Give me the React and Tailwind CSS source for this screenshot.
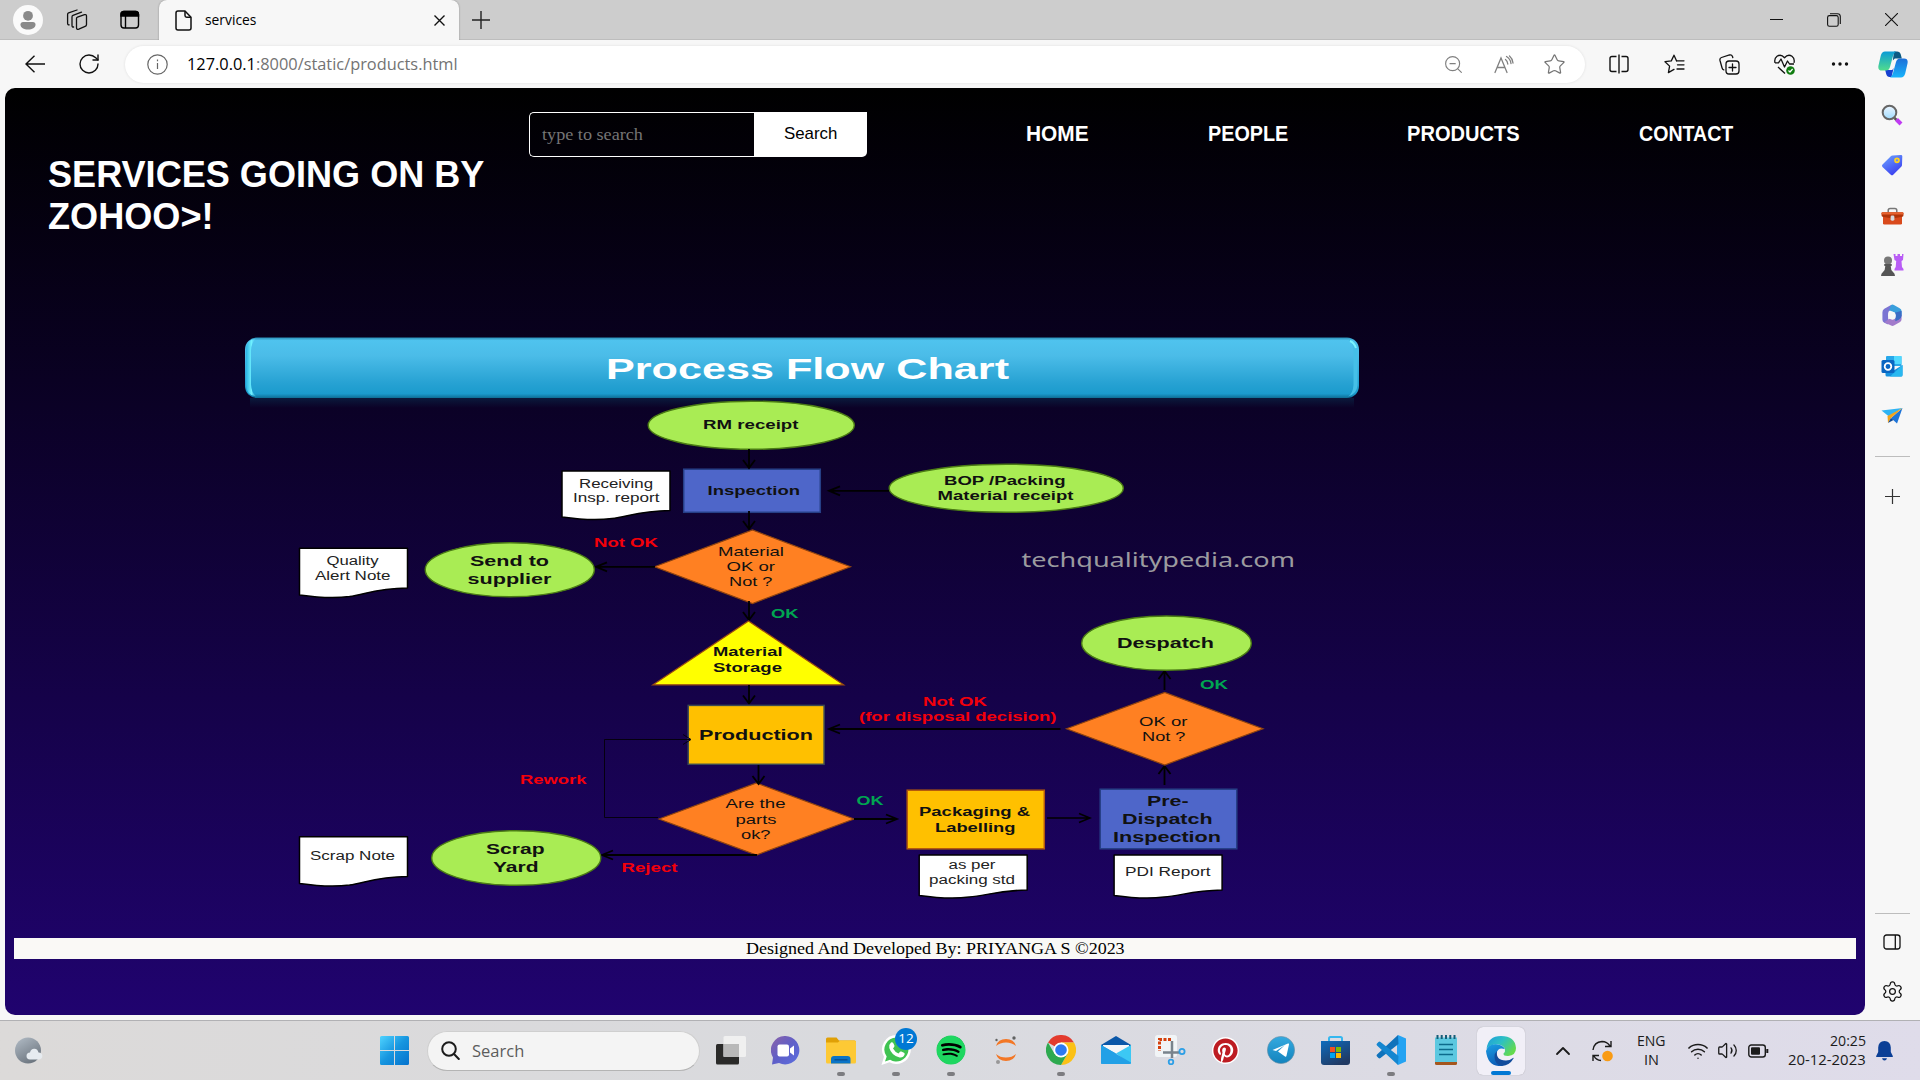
import React, { useLayoutEffect, useRef, useState } from "react";
import { ArrowLeft, RotateCw, ZoomOut, Star, ChevronUp, Wifi, Volume2, Settings } from "lucide-react";
import { FaSpotify, FaPinterest } from "react-icons/fa";

/* Single line of text stretched or condensed to a given width. */
function Fit({ w, className = "", children }) {
  const ref = useRef(null);
  const [k, setK] = useState(1);
  useLayoutEffect(() => {
    setK(w / ref.current.offsetWidth);
  }, [w]);
  return (
    <span className={"block overflow-visible whitespace-nowrap " + className} style={{ width: w }}>
      <span ref={ref} className="inline-block origin-left" style={{ transform: `scaleX(${k})` }}>
        {children}
      </span>
    </span>
  );
}

function Cell({ className = "", children }) {
  return <div className={"flex shrink-0 items-center justify-center " + className}>{children}</div>;
}

/* ---------- browser chrome ---------- */

function TitleBar() {
  return (
    <div className="flex h-10 items-center border-b border-[#bdbdbd] bg-[#cdcdcd] text-black">
      <Cell className="w-[55px]">
        <svg width="30" height="30" viewBox="0 0 30 30">
          <circle cx="15" cy="15" r="15" fill="#fafafa" />
          <circle cx="15" cy="10.8" r="4.9" fill="#8a8a8a" />
          <path d="M7.5 19.5c0-1.6 1-2.5 2.5-2.5h10c1.500 0 2.500.9 2.500 2.500 0 3.200-3.300 5-7.500 5s-7.500-1.800-7.500-5Z" fill="#8a8a8a" />
        </svg>
      </Cell>
      <Cell className="w-[45px] pr-px">
        <svg width="22" height="22" viewBox="0 0 22 22" fill="none" stroke="#111" strokeWidth="1.3" strokeLinejoin="round" strokeLinecap="round">
          <path d="M11.500 8.200 18.500 5.700q2-.6 2 1.400v8.300q0 1.500-1.400 2l-6.300 2.700q-2.300.8-2.300-1.300V9.600q0-1 1-1.400Z" />
          <path d="M7.600 18q-1.600.2-1.600-1.600V8q0-1.200 1-1.600L15.500 3.200" />
          <path d="M3.200 15.800q-1.600.2-1.600-1.600V5.500q0-1.200 1-1.600L11 1" />
        </svg>
      </Cell>
      <Cell className="w-[59px]">
        <svg width="20" height="20" viewBox="0 0 20 20" fill="none" stroke="#000" strokeWidth="1.4">
          <rect x="1" y="1.500" width="17.500" height="16.500" rx="3" />
          <path d="M1 6V4.500q0-3 3-3h11.500q3 0 3 3V6Z" fill="#000" />
          <path d="M5.500 6v12" />
        </svg>
      </Cell>
      <div className="flex h-10 w-[300px] items-center self-start rounded-t-lg bg-[#f7f7f7] shadow-[0_0_2px_rgba(0,0,0,0.35)]">
        <svg className="ml-4" width="17" height="21" viewBox="0 0 17 21" fill="none" stroke="#111" strokeWidth="1.5" strokeLinejoin="round">
          <path d="M1 3q0-2 2-2h7l6 6.200V18q0 2-2 2H3q-2 0-2-2Z" />
          <path d="M10 1v4.500q0 1.700 1.700 1.700H16" />
        </svg>
        <Fit w={51.5} className="ml-[13px] pb-px font-['Open_Sans','Noto_Sans',sans-serif] text-[14.5px] leading-5">services</Fit>
        <svg className="ml-auto mr-[14px]" width="11" height="11" viewBox="0 0 11 11" stroke="#111" strokeWidth="1.4">
          <path d="M.5.500l10 10M10.500.500l-10 10" />
        </svg>
      </div>
      <svg className="ml-[13px]" width="18" height="18" viewBox="0 0 18 18" stroke="#222" strokeWidth="1.4">
        <path d="M9 0v18M0 9h18" />
      </svg>
      <div className="ml-auto flex h-10 items-center pr-[22px]">
        <svg width="13" height="13" viewBox="0 0 13 13"><path d="M0 6.500h13" stroke="#111" /></svg>
        <svg className="ml-11" width="14" height="14" viewBox="0 0 14 14" fill="none" stroke="#111" strokeWidth="1.1">
          <rect x=".6" y="2.600" width="10.600" height="10.600" rx="1.800" />
          <path d="M3 .7h7.500q2.800 0 2.800 2.800V11" />
        </svg>
        <svg className="ml-11" width="13" height="13" viewBox="0 0 13 13" stroke="#111" strokeWidth="1.1">
          <path d="M0 0l13 13M13 0L0 13" />
        </svg>
      </div>
    </div>
  );
}

function Copilot() {
  return (
    <svg width="30" height="27" viewBox="0 0 30 27">
      <defs>
        <linearGradient id="cpA" x1="0" y1="0" x2="0" y2="1"><stop offset="0" stopColor="#0a9bd6" /><stop offset="1" stopColor="#52dc8c" /></linearGradient>
        <linearGradient id="cpB" x1="0" y1="0" x2="0" y2="1"><stop offset="0" stopColor="#1d6fd8" /><stop offset="1" stopColor="#18b4fb" /></linearGradient>
      </defs>
      <path d="M16 .5h3q3 0 3.800 3l1 4h-7l-2 2Z" fill="#0b5a84" />
      <path d="M13.500 26h-2q-2.500 0-3.300-3l-1-4h7l1.500-2Z" fill="#1741d0" />
      <path d="M7 .5h11q-2 1-3 4.500l-3 11q-1 3.500-4 3.500H4q-4.500 0-3.500-5L2.800 4.500Q4 .5 7 .5Z" fill="url(#cpA)" />
      <path d="M23 26.500H12q2-1 3-4.500l3-11q1-3.500 4-3.500h4q4.500 0 3.500 5l-2.300 10q-1.200 4-4.200 4Z" fill="url(#cpB)" />
    </svg>
  );
}

function Toolbar() {
  return (
    <div className="flex h-12 items-center bg-[#f7f7f7]">
      <Cell className="ml-[23px] w-6">
        <svg width="20" height="18" viewBox="0 0 20 18" fill="none" stroke="#111" strokeWidth="1.400">
          <path d="M20 9H1M9.500 .700 1 9l8.500 8.300" />
        </svg>
      </Cell>
      <Cell className="ml-[30px] w-6"><RotateCw size={24} strokeWidth={1.4} color="#111" /></Cell>
      <div className="ml-[24px] flex h-[37px] w-[1460px] items-center rounded-full bg-white shadow-[0_0_3px_rgba(0,0,0,0.1)]">
        <svg className="ml-[22px]" width="21" height="21" viewBox="0 0 21 21" fill="none" stroke="#666" strokeWidth="1.2">
          <circle cx="10.500" cy="10.500" r="9.700" />
          <path d="M10.500 9v6M10.500 5.500v1.700" />
        </svg>
        <Fit w={270.5} className="ml-[19px] pb-px font-['Open_Sans','Noto_Sans',sans-serif] text-[16.5px] leading-6 text-[#737373]">
          <span className="text-black">127.0.0.1</span>:8000/static/products.html
        </Fit>
        <div className="ml-auto flex items-center pr-[6px]">
          <Cell className="w-[50px]"><ZoomOut size={21} strokeWidth={1.3} color="#808080" /></Cell>
          <Cell className="w-[51px]">
            <svg width="20" height="19" viewBox="0 0 20 19" fill="none" stroke="#808080" strokeWidth="1.3" strokeLinecap="round">
              <path d="M1 17.500 7 3l6 14.500M3 12.500h8" />
              <path d="M11.500 4.500q2 1.500 2.300 4.500M12.500 1.500q4 2.500 4.500 7M15.500 1q3 2.500 3.500 7" />
            </svg>
          </Cell>
          <Cell className="w-[50px]"><Star size={23} strokeWidth={1.3} color="#757575" /></Cell>
        </div>
      </div>
      <Cell className="ml-[6px] w-[55px]">
        <svg width="20" height="20" viewBox="0 0 20 20" fill="none" stroke="#111" strokeWidth="1.4">
          <path d="M7.500 2.500H3q-2 0-2 2v11q0 2 2 2h4.500M12.500 2.500H17q2 0 2 2v11q0 2-2 2h-4.500M10 .5v19" />
        </svg>
      </Cell>
      <Cell className="ml-px w-[55px]">
        <svg width="21" height="20" viewBox="0 0 21 20" fill="none" stroke="#111" strokeWidth="1.3" strokeLinecap="round" strokeLinejoin="round">
          <path d="M12.500 6.800 10 1.200 7.300 6.900 1 7.700l4.600 4.400-1.200 6.500L10 15.400" />
          <path d="M12.500 6.800H20M13.500 10.800H20M13 15H20" />
        </svg>
      </Cell>
      <Cell className="w-[55px]">
        <svg width="21" height="21" viewBox="0 0 21 21" fill="none" stroke="#111" strokeWidth="1.300" strokeLinecap="round">
          <rect x="7" y="7" width="13" height="13" rx="3" />
          <path d="M13.500 10v7M10 13.500h7M4.800 15.800Q3.500 15.500 3.100 14L1 6.500q-.5-2.300 1.500-3L10.500 1q2.200-.5 3 1.500l.3 1.200" />
        </svg>
      </Cell>
      <Cell className="w-[55px]">
        <svg width="21" height="21" viewBox="0 0 21 21" fill="none" stroke="#111" strokeWidth="1.300" strokeLinejoin="round">
          <path d="M1 8.800Q0 4.500 3 2.200q4-2.500 7.500 1.500Q14 -.3 18 2.200q3 2.300 2 6.600M4 13l7 6.500M1 8.800h3.500L7 5l3.500 8 3-6 2 3H20" />
          <circle cx="16.500" cy="16.500" r="4.300" fill="#107c10" stroke="none" />
          <path d="m14.500 16.500 1.500 1.500 2.600-3" stroke="#fff" strokeWidth="1.200" />
        </svg>
      </Cell>
      <Cell className="w-[55px]">
        <svg width="18" height="4" viewBox="0 0 18 4" fill="#111"><circle cx="2.500" cy="2" r="1.700" /><circle cx="9" cy="2" r="1.700" /><circle cx="15.500" cy="2" r="1.700" /></svg>
      </Cell>
      <Cell className="w-[51px]"><Copilot /></Cell>
    </div>
  );
}

/* ---------- flow chart ---------- */

const LIME = "#a9ec54";
const ORANGE = "#ff8022";
const AMBER = "#ffc000";
const BLUE = "#4e66c9";

/* Text between two x positions on a baseline. */
function Tx({ a, b, y, s = 13, bold, fill = "#111", children, font = "'Liberation Sans', Arial, sans-serif" }) {
  return (
    <text x={a} y={y} textLength={b - a} lengthAdjust="spacingAndGlyphs" fontFamily={font} fontSize={s} fontWeight={bold ? 700 : 400} fill={fill}>
      {children}
    </text>
  );
}
function Oval({ x1, x2, y1, y2 }) {
  return <ellipse cx={(x1 + x2) / 2} cy={(y1 + y2) / 2} rx={(x2 - x1) / 2 - 0.7} ry={(y2 - y1) / 2 - 0.7} fill={LIME} stroke="#4b7c14" strokeWidth="1.4" />;
}
function Box({ x1, x2, y1, y2, fill, stroke }) {
  return <rect x={x1 + 0.7} y={y1 + 0.7} width={x2 - x1 - 1.4} height={y2 - y1 - 1.4} fill={fill} stroke={stroke} strokeWidth="1.5" />;
}
function Diamond({ x1, x2, y1, y2 }) {
  const cx = (x1 + x2) / 2;
  const cy = (y1 + y2) / 2;
  return <path d={`M${x1 + 1} ${cy}L${cx} ${y1 + 0.5}L${x2 - 1} ${cy}L${cx} ${y2 - 0.5}Z`} fill={ORANGE} stroke="#8f4410" strokeWidth="1.2" />;
}
function Doc({ x, y, r, l }) {
  const X = x + 108;
  return (
    <path
      d={`M${x} ${y}H${X}V${r}C${x + 78} ${r + 0.5} ${x + 66} ${r + 6} ${x + 50} ${l + 1}C${x + 35} ${l + 3} ${x + 18} ${l + 2} ${x} ${l - 0.5}Z`}
      fill="#fff" stroke="#000" strokeWidth="1.500" strokeLinejoin="round"
    />
  );
}
function Arrow({ x1, y1, x2, y2, w = 1.8 }) {
  const dx = Math.sign(x2 - x1);
  const dy = Math.sign(y2 - y1);
  const head = dx
    ? `M${x2 - dx * 11} ${y2 - 4.5}L${x2} ${y2}L${x2 - dx * 11} ${y2 + 4.5}`
    : `M${x2 - 6} ${y2 - dy * 8}L${x2} ${y2}L${x2 + 6} ${y2 - dy * 8}`;
  return <path d={`M${x1} ${y1}L${x2} ${y2}${head}`} fill="none" stroke="#000" strokeWidth={w} />;
}

function FlowChart() {
  return (
    <svg className="ml-[230px] block" width="1130" height="580" viewBox="235 330 1130 580">
      <defs>
        <linearGradient id="banner" x1="0" y1="0" x2="0" y2="1">
          <stop offset="0" stopColor="#2b8fb8" /><stop offset=".05" stopColor="#4fc3ee" /><stop offset=".3" stopColor="#4bbce8" />
          <stop offset=".75" stopColor="#27a2d3" /><stop offset=".93" stopColor="#1b9bcd" /><stop offset="1" stopColor="#0e6d94" />
        </linearGradient>
        <linearGradient id="glow" x1="0" y1="0" x2="0" y2="1"><stop offset="0" stopColor="#0a1a3c" /><stop offset="1" stopColor="#0a1a3c" stopOpacity="0" /></linearGradient>
        <linearGradient id="bevelL" x1="0" y1="0" x2="1" y2="0"><stop offset="0" stopColor="#2bb3e2" /><stop offset=".5" stopColor="#6ff0ff" /><stop offset="1" stopColor="#4fc3ee" stopOpacity="0" /></linearGradient>
      </defs>
      <rect x="250" y="398" width="1104" height="10" fill="url(#glow)" />
      <rect x="245" y="337.500" width="1114" height="60.500" rx="12" fill="url(#banner)" />
      <path d="M257 338.500q-11 1-11 12v34q0 11 11 12-5.500-2.500-6-12v-34q.5-9.500 6-12Z" fill="url(#bevelL)" />
      <path d="M1348 339.500q9 1.500 9.500 10.500v35q-.5 9-9.500 11.500 5-3 5.500-11.500v-34q-.5-8-5.500-11.500Z" fill="#45bfe8" />
      <path d="M1350 341q4 1.500 6 7" stroke="#7af4ff" strokeWidth="2" fill="none" />
      <Tx a={606} b={1009} y={378.500} s={30} bold fill="#fff">Process Flow Chart</Tx>

      <Oval x1={647.5} x2={855} y1={400.5} y2={450} />
      <Tx a={703} b={798.5} y={429} bold>RM receipt</Tx>
      <Doc x={562} y={471} r={510.5} l={517.5} />
      <Tx a={579} b={653} y={487.5} s={12.5} fill="#222">Receiving</Tx>
      <Tx a={573} b={659.500} y={502} s={12.5} fill="#222">Insp. report</Tx>
      <Box x1={683} x2={821} y1={468.5} y2={513} fill={BLUE} stroke="#263f86" />
      <Tx a={707.5} b={800} y={495} bold>Inspection</Tx>
      <Oval x1={888.5} x2={1124} y1={463.5} y2={513} />
      <Tx a={944} b={1065.500} y={484.700} bold>BOP /Packing</Tx>
      <Tx a={937.500} b={1073.500} y={500} bold>Material receipt</Tx>
      <Arrow x1={889} y1={490.8} x2={829} y2={490.8} />
      <Arrow x1={749} y1={449} x2={749} y2={468} />

      <Diamond x1={653.5} x2={851.500} y1={529.5} y2={604} />
      <Tx a={718} b={784} y={555.5}>Material</Tx>
      <Tx a={726.5} b={775} y={571}>OK or</Tx>
      <Tx a={729} b={772.5} y={586}>Not ?</Tx>
      <Arrow x1={749} y1={511} x2={749} y2={529} />
      <Arrow x1={655} y1={566.800} x2={596} y2={566.800} />
      <Tx a={594} b={658} y={547} bold fill="#f40009">Not OK</Tx>
      <Oval x1={424.500} x2={595} y1={542} y2={597.5} />
      <Tx a={470} b={549} y={565.500} s={15.300} bold>Send to</Tx>
      <Tx a={467.500} b={551.500} y={583.500} s={15.300} bold>supplier</Tx>
      <Doc x={299.5} y={548.3} r={588} l={595.5} />
      <Tx a={326.5} b={378.500} y={565} s={12.500} fill="#222">Quality</Tx>
      <Tx a={315} b={390.500} y={579.500} s={12.500} fill="#222">Alert Note</Tx>
      <Arrow x1={749} y1={601} x2={749} y2={620} />
      <Tx a={771} b={798.5} y={618} bold fill="#00a551">OK</Tx>

      <path d="M748.500 621 653 684.800H843.500Z" fill="#ffff00" stroke="#9a4a10" strokeWidth="1.300" />
      <Tx a={713} b={782.500} y={656.200} bold>Material</Tx>
      <Tx a={713} b={782} y={671.500} bold>Storage</Tx>
      <Arrow x1={749} y1={685} x2={749} y2={703.500} />
      <Box x1={687.5} x2={824.8} y1={704.7} y2={765} fill={AMBER} stroke="#3c4a52" />
      <Tx a={699} b={813} y={739.500} s={15.300} bold>Production</Tx>
      <Diamond x1={658} x2={855} y1={782.500} y2={855.500} />
      <Arrow x1={758.500} y1={765} x2={758.500} y2={784} />
      <Tx a={725.500} b={785.500} y={808}>Are the</Tx>
      <Tx a={735.500} b={776.500} y={823.500}>parts</Tx>
      <Tx a={741} b={770.500} y={838.500}>ok?</Tx>
      <path d="M658 817.500H604.500V739.500H690M683 734.500l8 5-8 5" fill="none" stroke="#05000f" strokeWidth="1" />
      <Tx a={520} b={586.500} y={784} bold fill="#f40009">Rework</Tx>
      <Arrow x1={757} y1={855} x2={602} y2={855} />
      <Tx a={621.500} b={677.500} y={872.200} bold fill="#f40009">Reject</Tx>
      <Oval x1={431} x2={601.500} y1={830} y2={886} />
      <Tx a={486} b={544.500} y={854.300} s={15.300} bold>Scrap</Tx>
      <Tx a={493} b={538.500} y={872} s={15.300} bold>Yard</Tx>
      <Doc x={299.5} y={836.8} r={876.500} l={884} />
      <Tx a={310} b={395} y={860.200} s={12.500} fill="#222">Scrap Note</Tx>

      <Tx a={856.500} b={883.500} y={805} bold fill="#00a551">OK</Tx>
      <Arrow x1={854} y1={819} x2={897} y2={819} />
      <Box x1={906.500} x2={1045} y1={789.500} y2={849.500} fill={AMBER} stroke="#b3590d" />
      <Tx a={919} b={1030} y={816} bold>Packaging &amp;</Tx>
      <Tx a={935} b={1015.500} y={831.500} bold>Labelling</Tx>
      <Doc x={919.2} y={855} r={890} l={896} />
      <Tx a={948.500} b={995.500} y={869.200} s={12.500} fill="#222">as per</Tx>
      <Tx a={929} b={1015} y={883.800} s={12.500} fill="#222">packing std</Tx>
      <Arrow x1={1047} y1={818} x2={1090} y2={818} w={1.500} />
      <Box x1={1099.500} x2={1237.500} y1={788.500} y2={849.500} fill={BLUE} stroke="#263f86" />
      <Tx a={1147} b={1188.500} y={806.300} s={15.300} bold>Pre-</Tx>
      <Tx a={1122} b={1212.500} y={824} s={15.300} bold>Dispatch</Tx>
      <Tx a={1113} b={1221} y={842} s={15.300} bold>Inspection</Tx>
      <Doc x={1114.1} y={855} r={890} l={896} />
      <Tx a={1125} b={1210.500} y={876.200} s={12.500} fill="#222">PDI Report</Tx>

      <Arrow x1={1164.500} y1={785} x2={1164.500} y2={766} />
      <Diamond x1={1065.500} x2={1264} y1={692} y2={765.500} />
      <Tx a={1139} b={1187.500} y={725.700}>OK or</Tx>
      <Tx a={1142} b={1185.500} y={741}>Not ?</Tx>
      <Arrow x1={1164.500} y1={690} x2={1164.500} y2={671} />
      <Tx a={1200} b={1228} y={689} bold fill="#00a551">OK</Tx>
      <Oval x1={1081} x2={1252} y1={615.300} y2={671} />
      <Tx a={1117} b={1214} y={648} s={15.300} bold>Despatch</Tx>
      <Arrow x1={1060.500} y1={729} x2={829} y2={729} />
      <Tx a={923} b={987} y={705.700} bold fill="#f40009">Not OK</Tx>
      <Tx a={859} b={1056.500} y={721} bold fill="#f40009">(for disposal decision)</Tx>
      <Tx a={1021.5} b={1295} y={566.500} s={20} fill="#9b9b9f" font="'Noto Sans', 'Open Sans', sans-serif">techqualitypedia.com</Tx>
    </svg>
  );
}

/* ---------- web page ---------- */

function Page() {
  return (
    <main className="ml-[5px] h-[927px] w-[1860px] overflow-hidden rounded-[10px] bg-linear-to-b/srgb from-black to-[#20036f]">
      <header className="flex h-[242px] items-start text-white">
        <h1 className="ml-[42.5px] mt-[66px] w-[481.5px] font-['Liberation_Sans',Arial,sans-serif] text-[36px] font-bold leading-[42px]">
          <Fit w={436}>SERVICES GOING ON BY</Fit>
          <Fit w={165.5}>ZOHOO&gt;!</Fit>
        </h1>
        <div className="mt-6 flex h-[45px] w-[338px]">
          <div className="flex w-[225px] items-center rounded-l-[5px] border border-r-0 border-white pl-[11.5px] text-[#757575]">
            <Fit w={100.5} className="font-['Liberation_Serif','Times_New_Roman',serif] text-[17px] leading-5">type to search</Fit>
          </div>
          <div className="flex w-[113px] items-center rounded-br-[5px] bg-white pl-[30px] text-black">
            <Fit w={53.5} className="pb-[1px] font-['Liberation_Sans',Arial,sans-serif] text-[17px] leading-5">Search</Fit>
          </div>
        </div>
        <nav className="ml-[158.5px] mt-[31px] flex font-['Liberation_Sans',Arial,sans-serif] text-[22.5px] font-bold leading-[30px]">
          <Fit w={63} className="mr-[119px]">HOME</Fit>
          <Fit w={80} className="mr-[119px]">PEOPLE</Fit>
          <Fit w={112.5} className="mr-[119.5px]">PRODUCTS</Fit>
          <Fit w={94}>CONTACT</Fit>
        </nav>
      </header>
      <FlowChart />
      <footer className="ml-[9px] mt-7 flex h-[21px] w-[1842px] bg-[#faf9f6] pl-[731.5px] text-black">
        <Fit w={378.5} className="font-['Liberation_Serif','Times_New_Roman',serif] text-[17.6px] leading-[21px]">
          Designed And Developed By: PRIYANGA S ©2023
        </Fit>
      </footer>
    </main>
  );
}

/* ---------- edge sidebar ---------- */

function Sidebar() {
  const cell = "h-[50.2px] w-[54px]";
  return (
    <aside className="flex w-[54px] flex-col items-center bg-[#f7f7f7] pt-[1.5px]">
      <Cell className={cell}>
        <svg width="22" height="22" viewBox="0 0 22 22">
          <defs><linearGradient id="sg" x1="0" y1="0" x2="0" y2="1"><stop offset="0" stopColor="#eef6ff" /><stop offset="1" stopColor="#9fdcff" /></linearGradient></defs>
          <path d="m13.500 14 2 2" stroke="#555" strokeWidth="2.500" />
          <path d="m15.500 15.500 4.500 4.500" stroke="#c03bf2" strokeWidth="4" />
          <circle cx="8.500" cy="8.500" r="6.800" fill="url(#sg)" stroke="#666" strokeWidth="2" />
        </svg>
      </Cell>
      <Cell className={cell}>
        <svg width="22" height="22" viewBox="0 0 22 22">
          <defs><linearGradient id="tg" x1="0" y1="0" x2=".6" y2="1"><stop offset="0" stopColor="#6ea8ff" /><stop offset="1" stopColor="#3b3ff0" /></linearGradient></defs>
          <path d="M11.500 1.500 20 1q1.300 0 1.300 1.300L21 11q0 1-.8 1.700l-8 8q-1.200 1-2.400 0L1.500 13q-1.200-1.300 0-2.500l8.300-8.300q.7-.7 1.700-.7Z" fill="url(#tg)" />
          <circle cx="16" cy="6.300" r="2" fill="#6a8cf0" stroke="#ffd21f" strokeWidth="1.700" />
        </svg>
      </Cell>
      <Cell className={cell + " pt-1"}>
        <svg width="23" height="19" viewBox="0 0 24 20">
          <path d="M7.500 6V3.500q0-2 2-2h5q2 0 2 2V6" fill="none" stroke="#777" strokeWidth="1.600" />
          <path d="M2 9h20v8q0 1.500-1.500 1.500h-17Q2 18.500 2 17Z" fill="#d94a1c" />
          <path d="M1.500 5.500h21q1 0 1 1V9q0 1-1 1.300L12 12 1.500 10.300Q.5 10 .5 9V6.500q0-1 1-1Z" fill="#b03409" />
          <path d="M1.500 5.500h21q1 0 1 1v1.300H.5V6.500q0-1 1-1Z" fill="#e8622f" />
          <rect x="10" y="9" width="4" height="5.500" rx="1.500" fill="#d5d9dd" />
        </svg>
      </Cell>
      <Cell className={cell}>
        <svg width="24" height="24" viewBox="0 0 24 24">
          <path d="M13.500 1h2v2h2V1h2.500v2h2V1h1.500l-.5 6-1.500 1 .5 6 1.500 2v1.500h-9V16l1.200-2 .5-6-1.700-1Z" fill="#b95df5" />
          <circle cx="8" cy="7.500" r="4" fill="#777" />
          <path d="M4 12q0-1 1-1h6q1 0 1 1t-1.300 1q0 4 2.300 6 2 1.500 2 4H1q0-2.500 2-4 2.300-2 2.300-6Q4 13 4 12Z" fill="#555" />
        </svg>
      </Cell>
      <Cell className={cell}>
        <svg width="22" height="23" viewBox="0 0 22 24">
          <path d="M10 1 3 5q-2 1.200-2 3.500v8q0 2 2 3l4 2V9.500Q7 7.500 9 6.500L14 4Z" fill="#7b74d3" />
          <path d="M10 1q1.500-.8 3 0l6 3.500q2 1 2 3.500v5L12 8 8 6.500Z" fill="#3a9fdc" />
          <path d="M21 11v5q0 2-2 3l-6 3.500q-1.500.8-3 0l-7-3.500 5-3.500 4 1 6-3.500Q20.500 12 21 11Z" fill="#a27bcb" />
          <path d="M14 9l7-2v5q0 3-3 4.500l-3.500 1.500V14Z" fill="#3b6cc5" />
          <circle cx="11" cy="12" r="4" fill="#f7f7f7" />
        </svg>
      </Cell>
      <Cell className={cell}>
        <svg width="22" height="22" viewBox="0 0 22 22">
          <path d="M5 2q0-1 1-1h13.500q1 0 1 1v9H5Z" fill="#28a8ea" />
          <path d="M13 1h7.500v8H13Z" fill="#50d9ff" />
          <path d="M21.500 10v10q0 1.500-1.500 1.500H6q-1.500 0-1.500-1.500v-6l9 1Z" fill="#1490df" />
          <path d="M21.500 10 9 21.500h11q1.500 0 1.500-1.500Z" fill="#28b8f0" />
          <rect x=".5" y="5" width="13" height="13" rx="1.500" fill="#0a66c2" />
          <circle cx="7" cy="11.500" r="3.300" fill="none" stroke="#fff" strokeWidth="1.800" />
        </svg>
      </Cell>
      <Cell className={cell}>
        <svg width="22" height="18" viewBox="0 0 22 18">
          <path d="M.5 3.500 21.500 1 8 9.500Z" fill="#2fb4f4" />
          <path d="M21.500 1 16 16.500 10 11Z" fill="#1d74d8" />
          <path d="M21.500 1 6.500 9l.5 7 3-5Z" fill="#f2a41c" />
          <path d="m7 16 3-5 2.500 2Z" fill="#134a94" />
        </svg>
      </Cell>
      <div className="mt-[15px] h-px w-[35px] bg-[#bdbdbd]" />
      <svg className="mt-8" width="15" height="15" viewBox="0 0 15 15"><path d="M7.500 0v15M0 7.500h15" stroke="#333" strokeWidth="1.200" /></svg>
      <div className="mt-auto h-px w-[35px] bg-[#bdbdbd]" />
      <svg className="mt-5" width="18" height="16" viewBox="0 0 18 16" fill="none" stroke="#111" strokeWidth="1.300">
        <rect x="1" y="1" width="16" height="14" rx="2.500" /><path d="M12.300 1v14" />
      </svg>
      <Settings className="mb-[17px] mt-[30px]" size={23} strokeWidth={1.300} color="#111" />
    </aside>
  );
}

/* ---------- taskbar ---------- */

function Weather() {
  return (
    <svg width="28" height="27" viewBox="0 0 28 27">
      <defs><linearGradient id="wg" x1="0" y1="0" x2=".6" y2="1"><stop offset="0" stopColor="#b3bdc7" /><stop offset="1" stopColor="#6d7680" /></linearGradient></defs>
      <circle cx="13" cy="13.500" r="13" fill="url(#wg)" />
      <path d="M15 22.500q-3.500-.3-3.500-3.500t3.500-3.500q1-4 4.500-3.700 3.200.3 4 3.700 3.800.3 3.800 3.500t-3.800 3.500Z" fill="#e6ebf0" />
    </svg>
  );
}
function StartIcon() {
  return (
    <svg width="29" height="29" viewBox="0 0 29 29">
      <defs><linearGradient id="wn" gradientUnits="userSpaceOnUse" x1="0" y1="0" x2="29" y2="29"><stop offset="0" stopColor="#4fd3ff" /><stop offset=".5" stopColor="#1695df" /><stop offset="1" stopColor="#0572cd" /></linearGradient></defs>
      <path d="M1.500 0H14v14H0V1.500Q0 0 1.500 0ZM15 0h12.500Q29 0 29 1.500V14H15ZM0 15h14v14H1.500Q0 29 0 27.500ZM15 15h14v12.500q0 1.500-1.500 1.500H15Z" fill="url(#wn)" />
    </svg>
  );
}
function TaskView() {
  return (
    <svg width="30" height="29" viewBox="0 0 30 29">
      <rect x="0" y="8" width="23" height="20.500" rx="1.500" fill="#2a2a29" />
      <rect x="7.500" y="0" width="22.500" height="21" rx="1.500" fill="#f0f0f0" />
      <rect x="7.500" y="8" width="15.500" height="13" fill="#b9b9b9" />
    </svg>
  );
}
function Chat() {
  return (
    <svg width="29" height="29" viewBox="0 0 29 29">
      <defs><linearGradient id="ch" x1="0" y1="0" x2="1" y2="1"><stop offset="0" stopColor="#8c62a8" /><stop offset=".5" stopColor="#5f5fc8" /><stop offset="1" stopColor="#5b6fe0" /></linearGradient></defs>
      <path d="M14.500 0A14.200 14.200 0 1 1 8 27L1 28.500 2 21.500A14.200 14.200 0 0 1 14.500 0Z" fill="url(#ch)" />
      <rect x="6.500" y="8.500" width="11.500" height="12" rx="2" fill="#fff" /><path d="m19 12.500 4-3v10l-4-3Z" fill="#fff" />
    </svg>
  );
}
function Explorer() {
  return (
    <svg width="30" height="27" viewBox="0 0 30 27">
      <path d="M0 2q0-1.500 1.500-1.500h9L13 3.500h15.500Q30 3.500 30 5v4H0Z" fill="#e0a006" />
      <path d="M0 5.500h12l2-2h14.500Q30 3.500 30 5v20q0 1.500-1.500 1.500h-27Q0 26.500 0 25Z" fill="#fdc935" />
      <path d="M5 26.500V22q0-3 3-3h13.500q3 0 3 3v4.500Z" fill="#0a74c7" /><path d="M8.500 22.800h13" stroke="#084f91" strokeWidth="1.400" />
    </svg>
  );
}
function WhatsApp() {
  return (
    <div className="relative flex h-[30px] w-[30px] items-center justify-center">
      <svg className="absolute inset-0" width="30" height="30" viewBox="0 0 30 30">
        <path d="M15.500 0A14.500 14.500 0 1 1 8.500 27.300L.5 30 3 21.800A14.500 14.500 0 0 1 15.500 0Z" fill="#fff" />
        <path d="M15.500 2.500a12 12 0 1 1-6.400 22.200L4 26.500l1.700-5A12 12 0 0 1 15.500 2.500Z" fill="#3fc351" />
        <path d="M10 7.500q1.300-.8 2.200.6l1.200 2.500q.3.800-.4 1.600l-1 1.200q2 3.600 5.500 5l1.500-1.700q.6-.5 1.300-.2l2.700 1.300q1 .5.600 1.700-1.200 3.500-5 3-8-1.800-10.300-9.500-.5-3.700 1.700-5.500Z" fill="#fff" />
      </svg>
      <span className="absolute -top-[7px] left-[14.5px] flex h-[22px] w-[22px] items-center justify-center rounded-full bg-[#0078d4] font-['Open_Sans',sans-serif] text-[13.5px] leading-none text-white">12</span>
    </div>
  );
}
function Spotify() {
  return (
    <div className="flex h-[28px] w-[28px] items-center justify-center rounded-full bg-black"><FaSpotify size={30} color="#1ed760" className="shrink-0" /></div>
  );
}
function Jupyter() {
  return (
    <svg width="22" height="28" viewBox="0 0 22 28">
      <path d="M1 10Q3 3 11 3t10 7Q17 6.500 11 6.500T1 10ZM1 18q2 7 10 7t10-7q-4 3.500-10 3.500T1 18Z" fill="#f37726" />
      <circle cx="19" cy="2" r="1.700" fill="#616262" /><circle cx="1.500" cy="4" r="1.200" fill="#616262" /><circle cx="3" cy="26" r="2" fill="#989798" />
    </svg>
  );
}
function Chrome() {
  return (
    <svg width="30" height="30" viewBox="0 0 30 30">
      <path d="M15 15 2 7.500A15 15 0 0 1 28 7.500H15Z" fill="#e33b2e" />
      <path d="M15 7.500h13A15 15 0 0 1 15 30l6.500-11.200Z" fill="#fbc116" />
      <path d="M2 7.500A15 15 0 0 0 15 30l6.500-11.200-13 0Z" fill="#2da94f" />
      <circle cx="15" cy="15" r="7.500" fill="#fff" /><circle cx="15" cy="15" r="5.800" fill="#2d7af1" />
    </svg>
  );
}
function Mail() {
  return (
    <svg width="30" height="28" viewBox="0 0 30 28">
      <path d="M0 9 15 0l15 9v4H0Z" fill="#0a57a8" />
      <path d="M2 9h26v6l-13 8L2 15Z" fill="#f4f6f8" />
      <path d="M0 9l15 8.500L0 28Z" fill="#2398e2" />
      <path d="M30 9 15 17.500 30 28Z" fill="#3cc8f4" />
      <path d="M0 9l30 17.500q0 1.500-1.500 1.500H1.500Q0 28 0 26.500Z" fill="#22a0e6" />
    </svg>
  );
}
function Snip() {
  return (
    <svg width="31" height="30" viewBox="0 0 31 30">
      <rect x="0" y="0" width="22" height="22" rx="2.500" fill="#f1f4f6" />
      <path d="M16 4.500H4.500V16" fill="none" stroke="#d5400c" strokeWidth="3" strokeDasharray="3 1.500" />
      <path d="M17 6v17M8 17.500h16" stroke="#79838c" strokeWidth="2.500" />
      <circle cx="27" cy="16.500" r="2.600" fill="none" stroke="#2d9fe6" strokeWidth="1.800" /><circle cx="16" cy="27" r="2.300" fill="none" stroke="#2d9fe6" strokeWidth="1.800" />
    </svg>
  );
}
function Pinterest() {
  return <div className="flex h-[27px] w-[27px] items-center justify-center rounded-full bg-white"><FaPinterest size={25} color="#bd1c22" /></div>;
}
function Telegram() {
  return (
    <svg width="28" height="28" viewBox="0 0 28 28">
      <defs><linearGradient id="tl" x1="0" y1="0" x2="0" y2="1"><stop offset="0" stopColor="#35aae0" /><stop offset="1" stopColor="#1383bd" /></linearGradient></defs>
      <circle cx="14" cy="14" r="13.600" fill="url(#tl)" stroke="#6d8fa2" strokeWidth=".6" />
      <path d="M5.500 14 21 7.600q1.300-.4 1 1l-2.500 11.200q-.3 1.500-1.500.8l-7-5 7-6.500-9 6Z" fill="#fff" />
    </svg>
  );
}
function Store() {
  return (
    <svg width="29" height="29" viewBox="0 0 29 29">
      <defs><linearGradient id="st" x1="0" y1="0" x2=".6" y2="1"><stop offset="0" stopColor="#0d6cbe" /><stop offset="1" stopColor="#213a63" /></linearGradient></defs>
      <path d="M8 6V2.500Q8 1 9.500 1h10Q21 1 21 2.500V6" fill="none" stroke="#35b7ef" strokeWidth="2" />
      <path d="M0 5h29v21q0 3-3 3H3q-3 0-3-3Z" fill="url(#st)" />
      <path d="M9 11h5v5H9Z" fill="#f25022" /><path d="M15 11h5v5h-5Z" fill="#7fba00" /><path d="M9 17h5v5H9Z" fill="#00a4ef" /><path d="M15 17h5v5h-5Z" fill="#ffb900" />
    </svg>
  );
}
function VSCode() {
  return (
    <svg width="30" height="30" viewBox="0 0 30 30">
      <path d="M22 0 30 3.500v23L22 30 21 22V8Z" fill="#24a3f2" />
      <path d="M22 0 1 19.500q-1 1 0 2L2.500 23q1 .8 2 0L22.500 9Z" fill="#0f72bb" />
      <path d="M22 30 1 10.500q-1-1 0-2L2.500 7q1-.8 2 0L22.500 21Z" fill="#1486d0" />
    </svg>
  );
}
function Notepad() {
  return (
    <svg width="22" height="30" viewBox="0 0 22 30">
      <path d="M0 27h22v1.500q0 1.500-1.500 1.500h-19Q0 30 0 28.500Z" fill="#a4561e" />
      <path d="M0 2.500h22V27H0Z" fill="#5cc8e0" />
      <path d="M4 9.500h14M4 14.500h14M4 19.500h14" stroke="#0c6b8c" strokeWidth="1.700" />
      <path d="M2.500 0v4M6.700 0v4M11 0v4M15.300 0v4M19.500 0v4" stroke="#155e78" strokeWidth="2" />
    </svg>
  );
}
function Edge() {
  return (
    <svg width="30" height="30" viewBox="0 0 30 30">
      <defs>
        <linearGradient id="e1" x1="0" y1="0" x2="1" y2=".6"><stop offset="0" stopColor="#1f9ade" /><stop offset=".5" stopColor="#2dc0c4" /><stop offset="1" stopColor="#64da4c" /></linearGradient>
        <linearGradient id="e2" x1="0" y1="0" x2=".3" y2="1"><stop offset="0" stopColor="#1aa0e4" /><stop offset="1" stopColor="#0d5fb8" /></linearGradient>
      </defs>
      <path d="M.5 13Q2 0 15 0q14 0 15 12 0 7.500-8 8-5 0-4.500-2.500 2-1.500 1.500-4.500Q17.500 9 12 8.500 4 8 .5 13Z" fill="url(#e1)" />
      <path d="M0 15Q2 8 10 8.300q7 .5 9 5-7-2.500-8.500 4Q10 27 17 29.800 2 32 0 15Z" fill="url(#e2)" />
      <path d="M11 15q-1.500 9 8.500 9.500 4 .2 7.500-2.500 1-.5.500.5-4 7-11.500 7.400Q8.500 28 8.500 21 8.500 17 11 15Z" fill="#124c9c" />
    </svg>
  );
}

const APPS = [
  [TaskView, false], [Chat, false], [Explorer, true], [WhatsApp, true], [Spotify, true], [Jupyter, false], [Chrome, true], [Mail, false],
  [Snip, false], [Pinterest, false], [Telegram, false], [Store, false], [VSCode, true], [Notepad, false],
];

function Taskbar() {
  const font = "font-['Open_Sans','Noto_Sans',sans-serif]";
  return (
    <div className="flex h-[60px] items-center border-t border-[#b1b1b4] bg-linear-to-r from-[#dcdad9] via-[#d9dade] via-45% to-[#dfdcea] text-[#1b1b1b]">
      <div className="ml-[15px]"><Weather /></div>
      <div className="ml-[337px]"><StartIcon /></div>
      <div className="ml-[18px] flex h-10 w-[273px] items-center rounded-full border border-[#cfcfcf] border-b-[#b4b4b4] bg-[#f4f4f4]">
        <svg className="ml-[13px]" width="19" height="19" viewBox="0 0 19 19" fill="none" stroke="#1b1b1b" strokeWidth="2" strokeLinecap="round">
          <circle cx="8" cy="8" r="6.800" /><path d="m13 13 4.800 5" />
        </svg>
        <Fit w={52} className={"ml-3 text-[16.500px] leading-6 text-[#5c5c5c] " + font}>Search</Fit>
      </div>
      <div className="ml-[3px] flex">
        {APPS.map(([Icon, open], i) => (
          <div key={i} className="flex h-[50px] w-[55px] flex-col items-center pt-[3px]">
            <Cell className="h-[43px]"><Icon /></Cell>
            {open && <span className="h-1 w-2 rounded-full bg-[#7c7c80]" />}
          </div>
        ))}
      </div>
      <div className="ml-[3.500px] flex h-12 w-[48px] flex-col items-center rounded-md bg-[#f1eff7] shadow-[0_0_1px_rgba(0,0,0,0.3)]">
        <Cell className="h-[44px] pb-px pt-[5px]"><Edge /></Cell>
        <span className="h-1 w-5 shrink-0 rounded-full bg-[#0078d4]" />
      </div>
      <ChevronUp className="ml-[26px]" size={24} strokeWidth={1.800} />
      <svg className="ml-[17.500px]" width="21" height="22" viewBox="0 0 21 22" fill="none" stroke="#1b1b1b" strokeWidth="1.400">
        <path d="M1 10Q2 2 10 1.500q5 0 8 4.500M19 1v5.500h-6M1 21v-5.500h6M2 16q2 4 7 4.500" />
        <circle cx="15.500" cy="16" r="5.300" fill="#f99b13" stroke="none" />
      </svg>
      <div className={"ml-6 flex flex-col items-center pb-px text-[14.5px] leading-[19.5px] " + font}>
        <Fit w={29}>ENG</Fit>
        <Fit w={15}>IN</Fit>
      </div>
      <Wifi className="ml-[21px]" size={22} strokeWidth={1.600} />
      <Volume2 className="ml-2" size={21} strokeWidth={1.500} />
      <svg className="ml-[9.500px]" width="21" height="14" viewBox="0 0 21 14" fill="none" stroke="#1b1b1b" strokeWidth="1.400">
        <rect x=".8" y="1" width="16.500" height="12" rx="2.500" /><rect x="3" y="3.300" width="9" height="7.400" rx="1" fill="#1b1b1b" stroke="none" /><path d="M19.300 5v4" strokeWidth="2" />
      </svg>
      <div className={"ml-[19.5px] flex flex-col items-end pb-px text-[14.5px] leading-[19.5px] " + font}>
        <Fit w={36}>20:25</Fit>
        <Fit w={78}>20-12-2023</Fit>
      </div>
      <svg className="ml-[10px]" width="17" height="20" viewBox="0 0 17 20" fill="#0b3f96">
        <path d="M8.500 0q6 .3 6.300 6.500V11l2 4q.3 1-.8 1H1q-1.100 0-.8-1l2-4V6.500Q2.500.3 8.500 0ZM6 17.300h5q-.6 2.200-2.500 2.200T6 17.300Z" />
      </svg>
    </div>
  );
}

export default function App() {
  return (
    <div className="flex h-[1080px] w-[1920px] flex-col overflow-hidden bg-[#f7f7f7]">
      <TitleBar />
      <Toolbar />
      <div className="flex h-[932px]">
        <Page />
        <Sidebar />
      </div>
      <Taskbar />
    </div>
  );
}
